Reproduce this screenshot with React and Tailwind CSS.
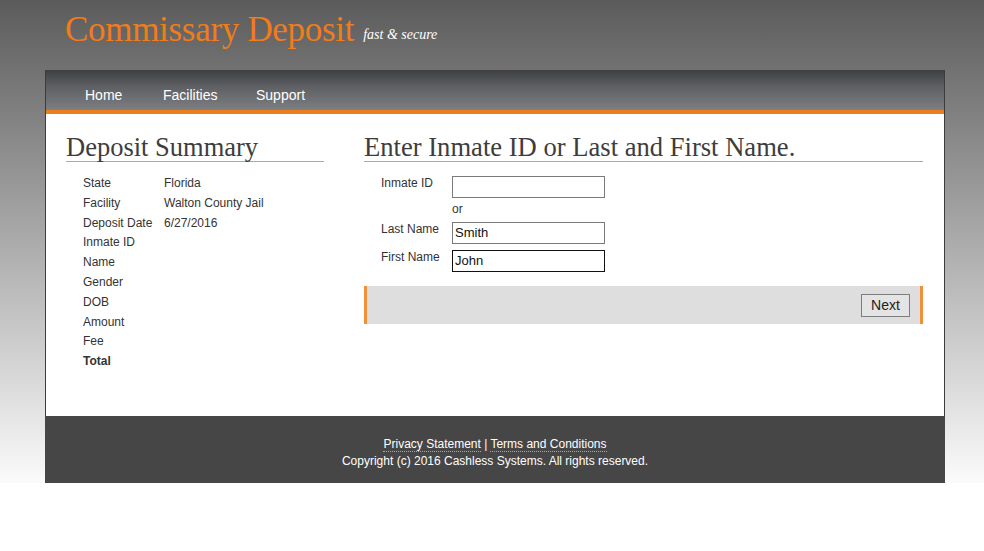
export default function App() {
  const rows = [
    ["State", "Florida"],
    ["Facility", "Walton County Jail"],
    ["Deposit Date", "6/27/2016"],
    ["Inmate ID", ""],
    ["Name", ""],
    ["Gender", ""],
    ["DOB", ""],
    ["Amount", ""],
    ["Fee", ""],
  ];
  return (
    <div className="min-h-[551px] w-full bg-[linear-gradient(to_bottom,#5b5b5b_0px,#fbfbfb_483px,#ffffff_483px)] font-['Liberation_Sans',Arial,sans-serif]">
      <div className="ml-[45px] w-[900px]">
        <div className="h-[70px] flex items-start pt-[10px] pl-[20px]">
          <span className="font-['Liberation_Serif',serif] text-[35px] leading-[40px] text-[#f07c1a] tracking-[-0.3px]">
            Commissary Deposit
          </span>
          <span className="ml-[9px] mt-[14px] font-['Liberation_Serif',serif] italic text-[14px] text-white">
            fast &amp; secure
          </span>
        </div>
        <div className="border-x border-[#3c3c3c] bg-white">
          <div className="h-[40px] bg-[linear-gradient(to_bottom,#3f3f42_0%,#5e5f62_40%,#7d7e81_100%)] flex items-start pt-[17px] pl-[39px] text-[14px] leading-[16px] text-white">
            <span className="w-[78px]">Home</span>
            <span className="w-[93px]">Facilities</span>
            <span>Support</span>
          </div>
          <div className="h-[4px] bg-[#ec7f1c]" />
          <div className="flex pt-[20px] pb-[44px]">
            <div className="ml-[20px] w-[258px]">
              <h2 className="font-['Liberation_Serif',serif] text-[26.5px] leading-[27px] text-[#3d3d3d] border-b border-[#a8a8a8]">
                Deposit Summary
              </h2>
              <div className="mt-[12px] pl-[17px] text-[12px] text-[#333] leading-[19.8px]">
                {rows.map(([k, v]) => (
                  <div key={k} className="flex">
                    <span className="w-[81px]">{k}</span>
                    <span>{v}</span>
                  </div>
                ))}
                <div className="font-bold">Total</div>
              </div>
            </div>
            <div className="ml-[40px] w-[559px]">
              <h2 className="font-['Liberation_Serif',serif] text-[26.6px] leading-[27px] text-[#3d3d3d] border-b border-[#a8a8a8]">
                Enter Inmate ID or Last and First Name.
              </h2>
              <div className="mt-[14px] pl-[17px] text-[12px] text-[#333]">
                <div className="flex">
                  <span className="w-[71px] leading-[14px]">Inmate ID</span>
                  <div className="w-[153px] h-[22px] border border-[#7a7a7a] bg-white" />
                </div>
                <div className="pl-[71px] mt-[3px] h-[20px] leading-[16px]">or</div>
                <div className="flex mt-[1px]">
                  <span className="w-[71px] leading-[14px]">Last Name</span>
                  <div className="w-[153px] h-[22px] border border-[#7a7a7a] bg-white text-[13px] text-[#111] pl-[2px] leading-[20px]">Smith</div>
                </div>
                <div className="flex mt-[6px]">
                  <span className="w-[71px] leading-[14px]">First Name</span>
                  <div className="w-[153px] h-[22px] border border-[#111] bg-white text-[13px] text-[#111] pl-[2px] leading-[20px]">John</div>
                </div>
              </div>
              <div className="mt-[14px] h-[38px] bg-[#dedede] border-x-[3px] border-[#f0913a] flex items-center justify-end pr-[10px]">
                <div className="w-[49px] h-[23px] border border-[#7e7e7e] bg-[#e4e4e4] text-[14px] text-[#222] flex items-center justify-center">
                  Next
                </div>
              </div>
            </div>
          </div>
        </div>
        <div className="h-[67px] bg-[#464646] flex flex-col items-center pt-[20px] text-[12px] text-white leading-[16px]">
          <div>
            <span className="border-b border-dotted border-[#aaa]">Privacy Statement</span>
            <span> | </span>
            <span className="border-b border-dotted border-[#aaa]">Terms and Conditions</span>
          </div>
          <div className="mt-[1px]">Copyright (c) 2016 Cashless Systems. All rights reserved.</div>
        </div>
      </div>
    </div>
  );
}
